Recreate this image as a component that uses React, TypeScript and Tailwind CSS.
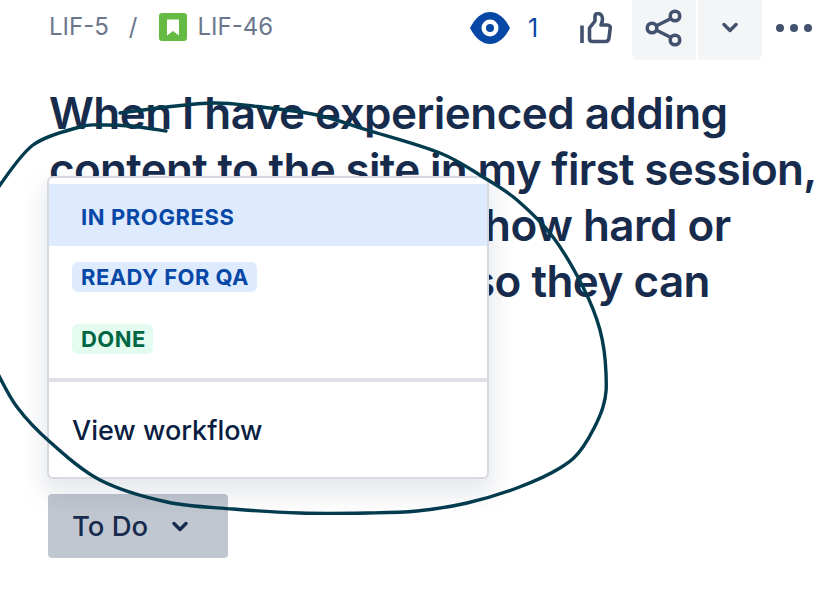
// Issue view header with the status dropdown open and a hand-drawn circle on top
const inter = "font-['Inter',sans-serif]";

// hand-drawn loop, smoothed through sampled points
const loopPoints: [number, number][] = [
  [120, 113], [167, 107], [213, 103], [253, 106], [317, 115], [367, 130], [440, 153], [483, 177],
  [517, 200], [553, 237], [583, 287], [600, 330], [606, 373], [603, 407], [583, 447], [560, 468],
  [517, 488], [467, 503], [417, 511], [367, 513], [300, 513], [233, 509], [167, 502], [100, 480],
  [50, 442], [17, 407], [-4, 370],
];
const tailPoints: [number, number][] = [[166, 131], [130, 126], [100, 125], [80, 127], [33, 145], [-3, 189]];

function smooth(pts: [number, number][]) {
  let d = `M${pts[0][0]} ${pts[0][1]}`;
  for (let i = 0; i < pts.length - 1; i++) {
    const p0 = pts[Math.max(i - 1, 0)];
    const p1 = pts[i];
    const p2 = pts[i + 1];
    const p3 = pts[Math.min(i + 2, pts.length - 1)];
    d += ` C${p1[0] + (p2[0] - p0[0]) / 6} ${p1[1] + (p2[1] - p0[1]) / 6} ${p2[0] - (p3[0] - p1[0]) / 6} ${p2[1] - (p3[1] - p1[1]) / 6} ${p2[0]} ${p2[1]}`;
  }
  return d;
}

const Chevron = ({ className }: { className: string }) => (
  <svg viewBox="0 0 16 12" fill="none" className={className}>
    <path d="M2 2.500l6 6 6-6" stroke="currentColor" strokeWidth="3.400" strokeLinecap="round" strokeLinejoin="round" />
  </svg>
);

const App = () => (
  <div className={`relative h-[594px] w-[818px] overflow-hidden bg-white ${inter}`}>
    {/* Top bar */}
    <div className="flex h-[60px] pl-[49px]">
      <div className="flex h-[54px] items-center text-[24px] text-[#6b778c]">
        <span>LIF-5</span>
        <span className="ml-[20px]">/</span>
        <span className="ml-[22px] flex h-[28px] w-[28px] items-center justify-center rounded-[3px] bg-[#65ba43]">
          <svg viewBox="0 0 14 16" className="h-[17px] w-[14px]">
            <path d="M1 0h12v16L7 11.500 1 16z" fill="#fff" />
          </svg>
        </span>
        <span className="ml-[10px]">LIF-46</span>
      </div>
      <div className="ml-auto flex items-start">
        <svg viewBox="0 0 40 32" className="mt-[12px] h-[32px] w-[40px]">
          <path d="M0 16C5 6 12 0 20 0s15 6 20 16c-5 10-12 16-20 16S5 26 0 16z" fill="#0747a6" />
          <circle cx="20" cy="16" r="8.500" fill="#fff" />
          <circle cx="20" cy="16" r="4" fill="#0747a6" />
        </svg>
        <span className="ml-[18px] mt-[10px] w-[16px] text-[25px] leading-[36px] text-[#0747a6]">1</span>
        <svg viewBox="0 0 32 32" fill="none" className="ml-[36px] mt-[12px] h-[32px] w-[32px]" stroke="#42526e" strokeWidth="3.600" strokeLinejoin="round">
          <path d="M9.500 16l5.500-7V4.500c0-1.800 1-3 2.800-3 3.200 0 4.700 2.800 4.700 5.500 0 2.500-1 4.500-1.500 6h6c2.500 0 3.500 1.500 3.200 3.500l-1.200 9.500c-.3 2.500-1.500 3.500-3.500 3.500H12.500c-2 0-3-1-3-2.500z" />
          <path d="M2 13.500V31" />
        </svg>
        <div className="ml-[20px] flex h-[60px] w-[64px] items-center justify-center rounded-bl-[6px] bg-[#f4f5f7] pb-[4px]">
          <svg viewBox="0 0 38 38" fill="none" stroke="#42526e" strokeWidth="3.500" className="h-[38px] w-[38px]">
            <path d="M7 19L31 7M7 19L31 31" />
            <circle cx="7" cy="19" r="4.800" fill="#f4f5f7" />
            <circle cx="30" cy="7" r="4.800" fill="#f4f5f7" />
            <circle cx="30" cy="31" r="4.800" fill="#f4f5f7" />
          </svg>
        </div>
        <div className="ml-[2px] flex h-[60px] w-[64px] items-center justify-center rounded-br-[6px] bg-[#f4f5f7] pb-[4px]">
          <Chevron className="h-[12px] w-[16px] text-[#42526e]" />
        </div>
        <div className="ml-[14px] mr-[6px] mt-[24px] flex w-[36px] justify-between">
          <span className="h-[8px] w-[8px] rounded-full bg-[#42526e]" />
          <span className="h-[8px] w-[8px] rounded-full bg-[#42526e]" />
          <span className="h-[8px] w-[8px] rounded-full bg-[#42526e]" />
        </div>
      </div>
    </div>

    {/* Title: the start of the last two lines sits under the dropdown */}
    <h1 className="mt-[25px] whitespace-nowrap pl-[49px] text-[44px] font-semibold leading-[56px] tracking-[-0.55px] text-[#172b4d]">
      <span className="block">When I have experienced adding</span>
      <span className="block tracking-[-0.68px]">content to the site in my first session,</span>
      <span className="block pl-[435px]">how hard or</span>
      <span className="block pl-[422px]">so they can</span>
    </h1>

    {/* Status button */}
    <div className="absolute left-[48px] top-[494px] flex h-[64px] w-[180px] items-center rounded-[4px] bg-[#c1c7d0] pl-[24px] pt-[1px] text-[27.500px] font-medium text-[#172b4d]">
      To Do
      <Chevron className="ml-[24px] h-[12px] w-[16px] text-[#172b4d]" />
    </div>

    {/* Status dropdown */}
    <div className="absolute left-[47px] top-[176px] h-[303px] w-[442px] rounded-[6px] border-2 border-[#d6d9df] bg-white pt-[6px] shadow-[0_12px_24px_4px_rgba(9,30,66,0.1)]">
      <div className="flex h-[62px] items-center bg-[#deebff] pl-[32px] pt-[3px] text-[22px] font-bold leading-[30px] tracking-[0.6px] text-[#0747a6]">IN PROGRESS</div>
      <div className="mt-[16px] flex flex-col items-start gap-[32px] pl-[23px] text-[22px] font-bold leading-[29px] tracking-[0.45px]">
        <span className="rounded-[6px] bg-[#deebff] pl-[9px] pr-[8px] pt-[1px] text-[#0747a6]">READY FOR QA</span>
        <span className="rounded-[6px] bg-[#e3fcef] pl-[9px] pr-[7px] pt-[1px] text-[#006644]">DONE</span>
      </div>
      <div className="mt-[24px] h-[4px] bg-[#dfe1e6]" />
      <div className="flex h-[94px] items-center pl-[23px] pt-[4px] text-[27px] font-medium text-[#091e42]">View workflow</div>
    </div>

    {/* Hand-drawn circle */}
    <svg viewBox="0 0 818 594" fill="none" stroke="#023a4e" strokeWidth="3.400" strokeLinecap="round" className="pointer-events-none absolute left-0 top-0 h-[594px] w-[818px]">
      <path d={smooth(loopPoints)} />
      <path d={smooth(tailPoints)} />
    </svg>
  </div>
);

export default App;
